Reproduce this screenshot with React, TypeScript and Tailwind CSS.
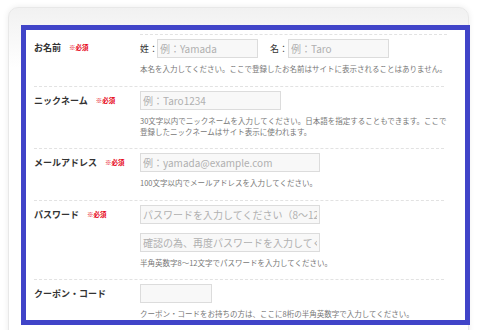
import React from 'react';

const font = { fontFamily: '"Noto Sans CJK JP", "Noto Sans", sans-serif' };

function Required() {
  return <span className="text-[6.5px] font-bold text-[#e60012] leading-none">※必須</span>;
}

function Field({ placeholder, width }: { placeholder?: string; width: string }) {
  return (
    <input
      type="text"
      placeholder={placeholder}
      className={`${width} block h-[19px] border border-[#dcdcdc] bg-[#f8f8f8] px-[2px] text-[10px] leading-[17px] text-[#333] placeholder:text-[#b0b0b0] outline-none`}
    />
  );
}

function Help({ children }: { children: React.ReactNode }) {
  return <p className="mt-[5px] whitespace-nowrap text-[7.5px] leading-[11px] text-[#777]">{children}</p>;
}

function Label({ text, required }: { text: string; required?: boolean }) {
  return (
    <div className="mt-[4px] flex h-[19px] items-center gap-[8px]">
      <span className="text-[9px] leading-[12px] font-bold text-[#333]">{text}</span>
      {required && <Required />}
    </div>
  );
}

export default function App() {
  return (
    <div className="h-[330px] w-[500px] overflow-hidden bg-white pl-[8px] pt-[7px]" style={font}>
      <div className="h-[340px] w-[461px] rounded-[10px] border border-[#e8e8e8] bg-gradient-to-b from-[#f1f1f1] to-white to-[60px] pl-[12px] pt-[17px] shadow-[0_0_6px_rgba(0,0,0,0.08)]">
        <div className="h-[300px] w-[449px] overflow-hidden border-[5px] border-[#4044c8] bg-white pl-[8px] pt-[4px]">
          <div className="w-[410px]">
            {/* お名前 */}
            <div className="grid grid-cols-[106px_1fr]">
              <Label text="お名前" required />
              <div className="border-t border-dashed border-[#e2e2e2] pb-[12px] pt-[4px]">
                <div className="flex items-center">
                  <span className="w-[17px] text-[9px] leading-[12px] text-[#333]">姓：</span>
                  <Field placeholder="例：Yamada" width="w-[101px]" />
                  <span className="ml-[12px] w-[18px] text-[9px] leading-[12px] text-[#333]">名：</span>
                  <Field placeholder="例：Taro" width="w-[101px]" />
                </div>
                <Help>本名を入力してください。ここで登録したお名前はサイトに表示されることはありません。</Help>
              </div>
            </div>

            {/* ニックネーム */}
            <div className="grid grid-cols-[106px_1fr] border-t border-dashed border-[#e2e2e2]">
              <Label text="ニックネーム" required />
              <div className="pb-[11px] pt-[4px]">
                <Field placeholder="例：Taro1234" width="w-[141px]" />
                <Help>
                  30文字以内でニックネームを入力してください。日本語を指定することもできます。ここで
                  <br />
                  登録したニックネームはサイト表示に使われます。
                </Help>
              </div>
            </div>

            {/* メールアドレス */}
            <div className="grid grid-cols-[106px_1fr] border-t border-dashed border-[#e2e2e2]">
              <Label text="メールアドレス" required />
              <div className="pb-[12px] pt-[4px]">
                <Field placeholder="例：yamada@example.com" width="w-[180px]" />
                <Help>100文字以内でメールアドレスを入力してください。</Help>
              </div>
            </div>

            {/* パスワード */}
            <div className="grid grid-cols-[106px_1fr] border-t border-dashed border-[#e2e2e2]">
              <Label text="パスワード" required />
              <div className="pb-[11px] pt-[4px]">
                <Field placeholder="パスワードを入力してください（8～12文字）" width="w-[180px]" />
                <div className="mt-[9px]">
                  <Field placeholder="確認の為、再度パスワードを入力してください" width="w-[180px]" />
                </div>
                <Help>半角英数字8～12文字でパスワードを入力してください。</Help>
              </div>
            </div>

            {/* クーポン・コード */}
            <div className="grid grid-cols-[106px_1fr] border-t border-dashed border-[#e2e2e2]">
              <Label text="クーポン・コード" />
              <div className="pb-[11px] pt-[4px]">
                <Field width="w-[72px]" />
                <Help>クーポン・コードをお持ちの方は、ここに8桁の半角英数字で入力してください。</Help>
              </div>
            </div>
          </div>
        </div>
      </div>
    </div>
  );
}
